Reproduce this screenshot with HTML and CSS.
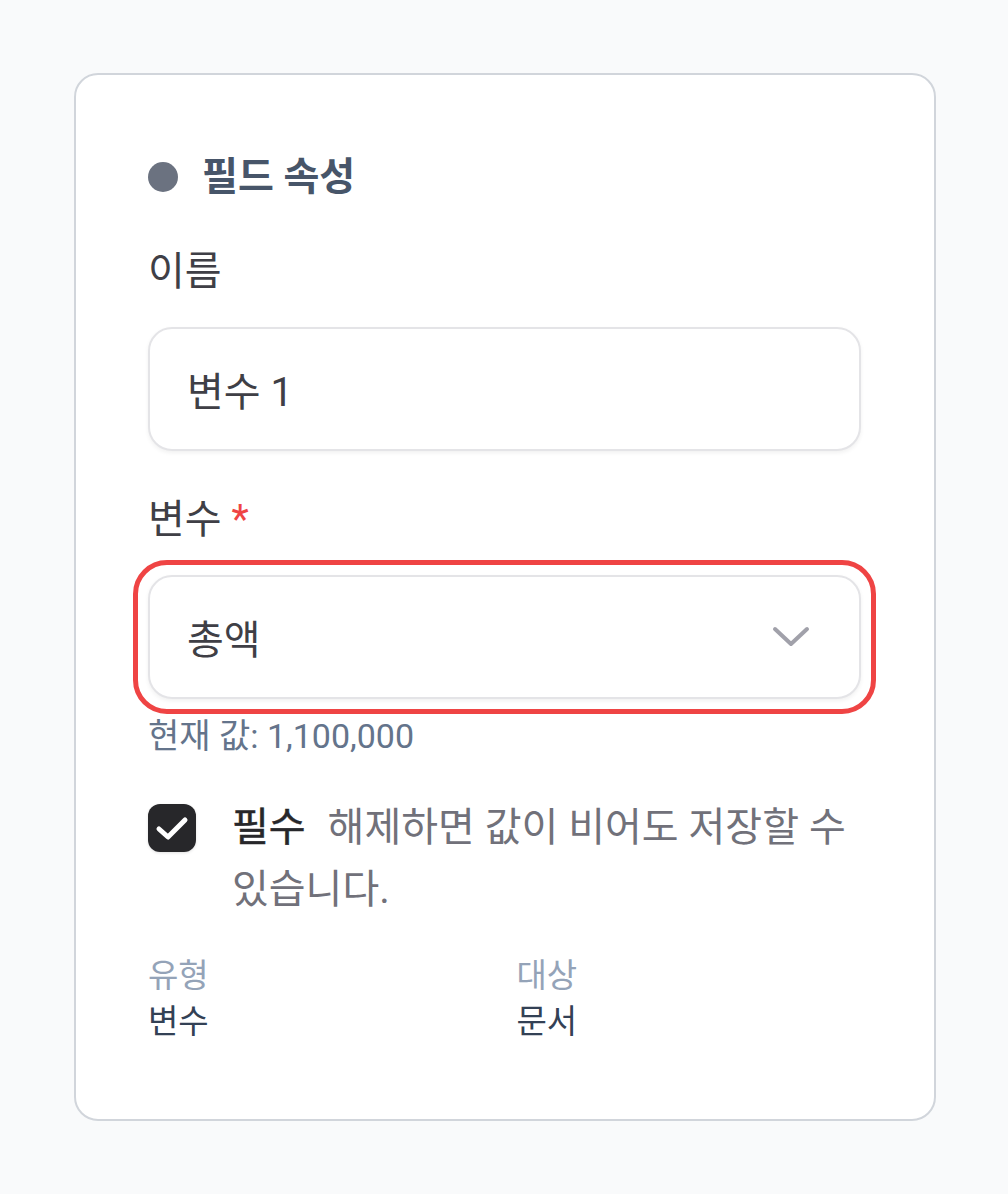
FILE: index.html
```html
<!DOCTYPE html>
<html lang="ko">
<head>
<meta charset="utf-8">
<title>필드 속성</title>
<link rel="stylesheet" href="styles.css">
</head>
<body>
<div class="page">
  <section class="card">
    <header class="card-head">
      <span class="dot"></span>
      <h2 class="title">필드 속성</h2>
    </header>

    <div class="field">
      <label class="label">이름</label>
      <div class="input">변수 1</div>
    </div>

    <div class="field field-var">
      <label class="label">변수 <span class="req">*</span></label>
      <div class="select">
        <span class="select-value">총액</span>
        <svg class="chev" width="40" height="24" viewBox="0 0 40 24" aria-hidden="true">
          <path d="M4 4 L20 19 L36 4" fill="none" stroke="#a1a1aa" stroke-width="4" stroke-linecap="round" stroke-linejoin="round"/>
        </svg>
      </div>
      <p class="hint">현재 값: 1,100,000</p>
    </div>

    <div class="check-row">
      <span class="checkbox">
        <svg width="48" height="48" viewBox="0 0 48 48" aria-hidden="true">
          <path d="M11 25 L20 33 L37 16" fill="none" stroke="#fff" stroke-width="5" stroke-linecap="round" stroke-linejoin="round"/>
        </svg>
      </span>
      <p class="check-text"><span class="check-strong">필수</span><span class="check-desc">해제하면 값이 비어도 저장할 수 있습니다.</span></p>
    </div>

    <dl class="meta">
      <div class="meta-item">
        <dt>유형</dt>
        <dd>변수</dd>
      </div>
      <div class="meta-item">
        <dt>대상</dt>
        <dd>문서</dd>
      </div>
    </dl>
  </section>
</div>
</body>
</html>
```

FILE: styles.css
```css
* { box-sizing: border-box; }

html, body {
  margin: 0;
  padding: 0;
  background: #f9fafb;
  font-family: Roboto, "Noto Sans CJK KR", sans-serif;
}

.page {
  padding: 73px 0 0 74px;
}

.card {
  width: 862px;
  height: 1048px;
  background: #ffffff;
  border: 2px solid #d1d5db;
  border-radius: 24px;
  padding: 82px 73px 0 72px;
  display: flex;
  flex-direction: column;
}

.card-head {
  display: flex;
  align-items: center;
  height: 40px;
  gap: 24px;
}

.dot {
  width: 30px;
  height: 30px;
  border-radius: 50%;
  background: #6b7280;
  flex: none;
}

.title {
  margin: 0;
  font-size: 39px;
  font-weight: 700;
  line-height: 40px;
  color: #475569;
}

.field {
  display: flex;
  flex-direction: column;
  margin-top: 55px;
}

.field-var {
  margin-top: 49px;
}

.label {
  font-size: 40px;
  line-height: 40px;
  color: #3f3f46;
  font-weight: 400;
}

.req {
  color: #ef4444;
}

.input,
.select {
  margin-top: 35px;
  height: 124px;
  border: 2px solid #e4e4e7;
  border-radius: 24px;
  background: #fff;
  box-shadow: 0 2px 4px rgba(0, 0, 0, 0.06);
  display: flex;
  align-items: center;
  padding: 0 48px 0 37px;
  font-size: 40px;
  color: #3f3f46;
}

.select {
  position: relative;
  justify-content: space-between;
}

.select::after {
  content: "";
  position: absolute;
  inset: -17px;
  border: 5px solid #ef4444;
  border-radius: 34px;
  pointer-events: none;
}

.chev {
  display: block;
}

.hint {
  margin: 17px 0 0;
  font-size: 34px;
  line-height: 40px;
  color: #64748b;
}

.check-row {
  display: flex;
  align-items: flex-start;
  gap: 36px;
  margin-top: 41px;
}

.checkbox {
  flex: none;
  width: 48px;
  height: 48px;
  margin-top: 7px;
  border-radius: 12px;
  background: #27272a;
  box-shadow: 0 1px 3px rgba(0, 0, 0, 0.12);
  display: flex;
}

.check-text {
  margin: 0;
  font-size: 40px;
  line-height: 62px;
  color: #71717a;
  word-break: keep-all;
}

.check-strong {
  color: #27272a;
  font-weight: 400;
  -webkit-text-stroke: 0.5px #27272a;
  margin-right: 22px;
}

.meta {
  margin: 33px 0 0;
  display: grid;
  grid-template-columns: 1fr 1fr;
  column-gap: 24px;
}

.meta-item dt {
  font-size: 33px;
  line-height: 44px;
  color: #94a3b8;
}

.meta-item dd {
  margin: 2px 0 0;
  font-size: 33px;
  line-height: 44px;
  color: #334155;
}
```
